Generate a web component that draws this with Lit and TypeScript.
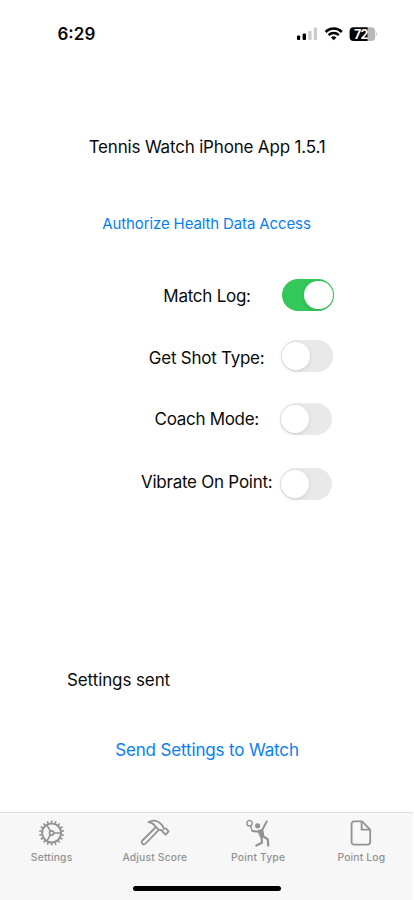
import { LitElement, html, css, svg } from "lit";
import { customElement, property } from "lit/decorators.js";
import { classMap } from "lit/directives/class-map.js";

@customElement("status-bar")
class StatusBar extends LitElement {
  static styles = css`
    :host { display: flex; height: 68px; box-sizing: border-box; padding: 23px 36px 0 57.5px; align-items: flex-start; justify-content: space-between; }
    .time { font-size: 17px; line-height: 22px; font-weight: 600; letter-spacing: 0; }
    svg { display: block; }
    .level { font: 700 12.5px/14px Inter, sans-serif; letter-spacing: -0.7px; }
  `;
  render() {
    return html`
      <span class="time">6:29</span>
      <svg width="81" height="22" viewBox="0 0 81 22">
        <rect x="0" y="12.6" width="3.2" height="4.4" rx="1" />
        <rect x="5.6" y="10.4" width="3.4" height="6.6" rx="1" />
        <rect x="11.2" y="7.7" width="3.4" height="9.3" rx="1" fill="#ccc" />
        <rect x="16.7" y="4.6" width="3.4" height="12.4" rx="1" fill="#ccc" />
        <g fill="none" stroke="#000" stroke-width="2.5">
          <path d="M28.6 9A11.4 11.4 0 0 1 44.8 9" />
          <path d="M31.6 12.2A7.3 7.3 0 0 1 41.8 12.2" />
        </g>
        <path d="M33.9 14.4A4.2 4.2 0 0 1 39.5 14.4L36.7 17.2Z" />
        <path d="M56.6 4.2H71V18H56.6A4 4 0 0 1 52.6 14V8.2A4 4 0 0 1 56.6 4.2Z" />
        <path d="M70.5 4.2H74.2A4 4 0 0 1 78.2 8.2V14A4 4 0 0 1 74.2 18H70.5Z" fill="#b8b8b8" />
        <path d="M79.2 8.8Q81 11 79.2 13.4Z" fill="#b0b0b0" />
        <text class="level" x="57" y="15.5" fill="#fff">72</text>
      </svg>
    `;
  }
}

@customElement("toggle-switch")
class ToggleSwitch extends LitElement {
  @property({ type: Boolean }) on = false;
  static styles = css`
    :host { display: block; }
    .track { width: 52.5px; height: 32.4px; box-sizing: border-box; border-radius: 17px; padding: 2px 1.2px; display: flex; background: #e9e9ea; }
    .on { background: #34c759; justify-content: flex-end; }
    .knob { width: 28.4px; height: 28.4px; border-radius: 50%; background: #fff; box-shadow: 0 1px 4px rgba(0, 0, 0, 0.12); }
  `;
  render() {
    return html`<div class=${classMap({ track: true, on: this.on })}><div class="knob"></div></div>`;
  }
}

const teeth = Array.from({ length: 18 }, (_, i) =>
  svg`<path d="M13.6 1.5V3.8" transform="rotate(${i * 20} 13.6 14)" />`
);

const gear = svg`<g fill="none" stroke="#929292" stroke-width="1.7">
  <circle cx="13.6" cy="14" r="9.5" stroke-width="2" />
  ${teeth}
  <circle cx="13.6" cy="14" r="2.1" />
  <path d="M15.8 14H23.1M12.4 12.1L8.8 5.8M12.4 15.9L8.8 22.2" />
</g>`;

const hammer = svg`<g fill="none" stroke="#929292" stroke-width="1.8" stroke-linejoin="round" stroke-linecap="round">
  <path d="M7.4 3.2C11 .8 16.2 1.1 19.3 4.3L21.7 6.8C22.5 7.7 22 9 22.7 9.7L25 9.5L27.6 12.4L24.6 15.6L21.6 12.9L21.7 11.5C20.2 11.1 18.5 11.4 17.5 10.4L14.4 7.4C13.3 6.1 12.7 4 7.4 3.2Z" />
  <path d="M14.5 8.5L.9 22C-.2 23.2 1.7 26.2 4.1 25L17.3 11.3" />
</g>`;

const player = svg`<g fill="none" stroke="#929292" stroke-linecap="round" stroke-linejoin="round">
  <ellipse cx="5.5" cy="4.2" rx="2.6" ry="2.8" stroke-width="1.4" />
  <path d="M6.4 7.2L8.2 11.8" stroke-width="1.4" />
  <path d="M8.4 12L12.6 12.6L18.4 10.8L22.7 2.4" stroke-width="2" />
  <path d="M18.8 17L23.8 20.4L24.3 26.6M17.6 17.8L17.9 23.7L12.3 26.6" stroke-width="2.2" />
  <path d="M14.2 12.2L18.8 11L19.8 17.4L17 18.4Z" fill="#929292" stroke-width="1" />
  <circle cx="13.6" cy="6.8" r="2.6" fill="#929292" stroke="none" />
</g>`;

const page = svg`<g fill="none" stroke="#929292" stroke-width="1.8" stroke-linejoin="round">
  <path d="M7 2.4H15L23.2 10.6V23.2A2.4 2.4 0 0 1 20.8 25.6H7A2.4 2.4 0 0 1 4.6 23.2V4.8A2.4 2.4 0 0 1 7 2.4Z" />
  <path d="M14.6 2.4V10.6H23.2" />
</g>`;

@customElement("tab-bar")
class TabBar extends LitElement {
  static styles = css`
    :host { display: block; box-sizing: border-box; width: 413px; height: 88px; border-top: 1px solid #dedede; background: #f7f7f7; }
    .tabs { display: grid; grid-template-columns: repeat(4, 103.25px); height: 73px; }
    .tab { display: flex; flex-direction: column; align-items: center; padding-top: 6px; color: #929292; font-size: 10.3px; line-height: 14px; font-weight: 500; white-space: nowrap; }
    svg { display: block; width: 28px; height: 28px; overflow: visible; margin-bottom: 3px; }
    .label { letter-spacing: 0.18px; }
    .home { width: 148px; height: 5.2px; margin: 0 auto; border-radius: 3px; background: #000; }
  `;
  render() {
    const tabs = [
      { label: "Settings", icon: gear },
      { label: "Adjust Score", icon: hammer },
      { label: "Point Type", icon: player },
      { label: "Point Log", icon: page },
    ];
    return html`
      <div class="tabs">
        ${tabs.map((t) => html`<div class="tab"><svg viewBox="0 0 28 28">${t.icon}</svg><span class="label">${t.label}</span></div>`)}
      </div>
      <div class="home"></div>
    `;
  }
}

@customElement("app-root")
class AppRoot extends LitElement {
  static styles = css`
    :host { display: flex; flex-direction: column; width: 414px; height: 900px; overflow: hidden; background: #fff; color: #0a0a0a; font-family: Inter, "Liberation Sans", sans-serif; }
    main { flex: 1; font-size: 17px; line-height: 22px; letter-spacing: -0.18px; white-space: nowrap; }
    .title { margin-top: 68px; text-align: center; }
    .link { color: #087ff0; text-align: center; }
    .authorize { margin: 56px 1px 0 0; font-size: 15px; line-height: 20px; letter-spacing: -0.12px; }
    .settings { padding-top: 45px; }
    .row { display: flex; height: 32.4px; justify-content: space-between; align-items: center; letter-spacing: -0.25px; }
    .match { margin: 0 80px 0 163.3px; }
    .shot { margin: 28.6px 80.8px 0 148.8px; }
    .match .label { padding-top: 2px; }
    .shot .label { padding-top: 3px; }
    .coach { margin: 30.4px 81.7px 0 154.6px; letter-spacing: -0.3px; }
    .coach .label { padding-top: 1px; }
    .vibrate { margin: 32.6px 81.7px 0 141px; }
    .vibrate .label { padding-bottom: 3px; }
    .status { margin: 169px 0 0 67px; letter-spacing: -0.1px; }
    .send { margin-top: 48px; letter-spacing: -0.15px; }
  `;
  render() {
    return html`
      <status-bar></status-bar>
      <main>
        <div class="title">Tennis Watch iPhone App 1.5.1</div>
        <div class="link authorize">Authorize Health Data Access</div>
        <div class="settings">
          <div class="row match"><span class="label">Match Log:</span><toggle-switch on></toggle-switch></div>
          <div class="row shot"><span class="label">Get Shot Type:</span><toggle-switch></toggle-switch></div>
          <div class="row coach"><span class="label">Coach Mode:</span><toggle-switch></toggle-switch></div>
          <div class="row vibrate"><span class="label">Vibrate On Point:</span><toggle-switch></toggle-switch></div>
        </div>
        <div class="status">Settings sent</div>
        <div class="link send">Send Settings to Watch</div>
      </main>
      <tab-bar></tab-bar>
    `;
  }
}
